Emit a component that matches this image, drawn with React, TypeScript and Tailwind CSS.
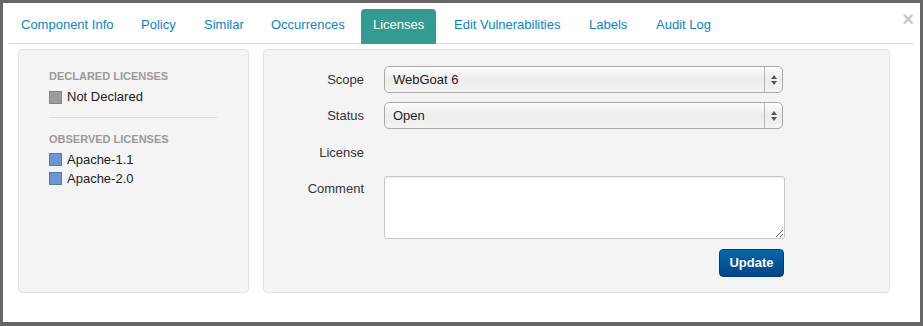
import React from "react";

const tabs: { label: string; w: string; active?: boolean }[] = [
  { label: "Component Info", w: "w-[120px]" },
  { label: "Policy", w: "w-[63px]" },
  { label: "Similar", w: "w-[67px]" },
  { label: "Occurrences", w: "w-[102px]" },
  { label: "Licenses", w: "w-[81px]", active: true },
  { label: "Edit Vulnerabilities", w: "w-[135px]" },
  { label: "Labels", w: "w-[67px]" },
  { label: "Audit Log", w: "w-[90px]" },
];

function Arrows() {
  return (
    <svg width="8" height="12" viewBox="0 0 8 12" className="block">
      <path d="M4 1 L7 5 L1 5 Z" fill="#555" />
      <path d="M4 11 L7 7 L1 7 Z" fill="#555" />
    </svg>
  );
}

function Select({ value }: { value: string }) {
  return (
    <div className="flex w-[399px] h-[27px] rounded-[5px] border border-[#a9a9a9] bg-linear-to-b from-[#fcfcfc] via-[#ececec] to-[#f4f4f4] shadow-[inset_0_1px_0_#fff]">
      <div className="flex-1 flex items-center pl-[8px] text-[13px] text-[#222]">{value}</div>
      <div className="w-[18px] border-l border-[#b5b5b5] flex items-center justify-center">
        <Arrows />
      </div>
    </div>
  );
}

function Swatch({ color }: { color: "gray" | "blue" }) {
  return (
    <span
      className={
        color === "gray"
          ? "inline-block w-[13px] h-[13px] bg-[#9b9b9b] border border-[#858585] mr-[5px]"
          : "inline-block w-[13px] h-[13px] bg-[#6b95d5] border border-[#5479b0] mr-[5px]"
      }
    />
  );
}

export default function App() {
  return (
    <div className="w-[923px] h-[326px] bg-[#666] pt-[3px] pl-[3px] pr-[3px] pb-[4px] font-['Liberation_Sans',Arial,sans-serif]">
      <div className="relative h-full bg-white pt-[6px] flex flex-col">
        <span className="absolute left-[897px] top-[6px] w-[16px] text-center text-[20px] leading-[20px] font-bold text-[#c8c8c8]">
          ×
        </span>
        <ul className="ml-[6px] w-[905px] flex border-b border-[#ddd]">
          {tabs.map((t) => (
            <li key={t.label} className={t.w + " flex -mb-px"}>
              <span
                className={
                  t.active
                    ? "block h-[35px] px-[12px] pt-[7px] leading-[18px] text-[13px] rounded-t-[4px] bg-[#349b93] text-white"
                    : "block h-[35px] px-[12px] pt-[7px] leading-[18px] text-[13px] text-[#0a84c8]"
                }
              >
                {t.label}
              </span>
            </li>
          ))}
        </ul>
        <div className="ml-[15px] mt-[5px] flex gap-[14px]">
          <div className="w-[231px] h-[244px] rounded-[4px] border border-[#e3e3e3] bg-[#f4f4f4] pl-[30px] pt-[19px]">
            <div className="w-[168px]">
              <div className="text-[11px] leading-[14px] font-bold text-[#9a9a9a]">DECLARED LICENSES</div>
              <div className="mt-[4px] h-[20px] flex items-center text-[13px] text-[#222]">
                <Swatch color="gray" />
                Not Declared
              </div>
              <div className="mt-[10px] border-t border-[#dddddd]" />
              <div className="mt-[14px] text-[11px] leading-[14px] font-bold text-[#9a9a9a]">OBSERVED LICENSES</div>
              <div className="mt-[4px] h-[19px] flex items-center text-[13px] text-[#222]">
                <Swatch color="blue" />
                Apache-1.1
              </div>
              <div className="h-[19px] flex items-center text-[13px] text-[#222]">
                <Swatch color="blue" />
                Apache-2.0
              </div>
            </div>
          </div>
          <div className="w-[627px] h-[244px] rounded-[4px] border border-[#e3e3e3] bg-[#f4f4f4] pt-[16px]">
            <div className="flex h-[27px] items-center">
              <div className="w-[100px] text-right text-[13px] text-[#333]">Scope</div>
              <div className="ml-[20px]">
                <Select value="WebGoat 6" />
              </div>
            </div>
            <div className="mt-[9px] flex h-[27px] items-center">
              <div className="w-[100px] text-right text-[13px] text-[#333]">Status</div>
              <div className="ml-[20px]">
                <Select value="Open" />
              </div>
            </div>
            <div className="mt-[10px] flex h-[27px] items-center">
              <div className="w-[100px] text-right text-[13px] text-[#333]">License</div>
            </div>
            <div className="mt-[10px] flex items-start">
              <div className="w-[100px] pt-[3px] leading-[20px] text-right text-[13px] text-[#333]">Comment</div>
              <textarea className="ml-[20px] w-[401px] h-[63px] rounded-[3px] border border-[#c8c8c8] bg-white shadow-[inset_0_1px_1px_rgba(0,0,0,0.075)] outline-none" />
            </div>
            <div className="mt-[10px] ml-[120px] w-[400px] flex justify-end">
              <button className="w-[65px] h-[28px] rounded-[4px] border border-[#003c7c] bg-linear-to-b from-[#0a68ad] to-[#00458a] text-white text-[13px] font-bold [text-shadow:0_-1px_0_rgba(0,0,0,0.25)]">
                Update
              </button>
            </div>
          </div>
        </div>
      </div>
    </div>
  );
}
